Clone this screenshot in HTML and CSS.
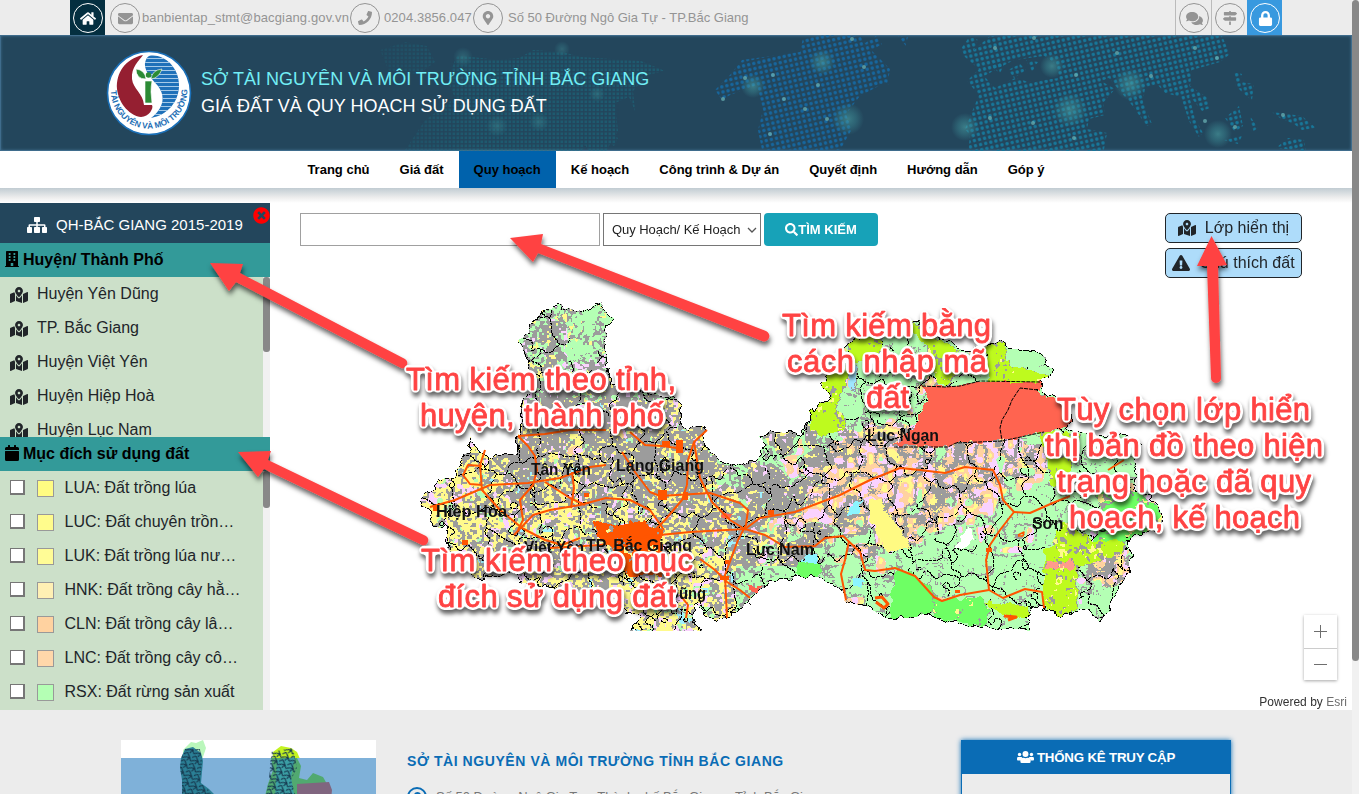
FILE: index.html
```html
<!DOCTYPE html>
<html lang="vi">
<head>
<meta charset="utf-8">
<title>Giá đất và quy hoạch sử dụng đất</title>
<link rel="stylesheet" href="styles.css">
</head>
<body>
<svg class="defs" width="0" height="0">
  <symbol id="home" viewBox="0 0 576 512"><path d="M280.37 148.26L96 300.11V464a16 16 0 0 0 16 16l112.06-.29a16 16 0 0 0 15.92-16V368a16 16 0 0 1 16-16h64a16 16 0 0 1 16 16v95.64a16 16 0 0 0 16 16.05L464 480a16 16 0 0 0 16-16V300L295.67 148.26a12.19 12.19 0 0 0-15.3 0zM571.6 251.47L488 182.56V44.05a12 12 0 0 0-12-12h-56a12 12 0 0 0-12 12v72.61L318.47 43a48 48 0 0 0-61 0L4.34 251.47a12 12 0 0 0-1.6 16.9l25.5 31A12 12 0 0 0 45.15 301l235.22-193.74a12.19 12.19 0 0 1 15.3 0L530.9 301a12 12 0 0 0 16.9-1.6l25.5-31a12 12 0 0 0-1.7-16.93z"/></symbol>
  <symbol id="mail" viewBox="0 0 512 512"><path d="M502.3 190.8c3.9-3.1 9.7-.2 9.7 4.7V400c0 26.5-21.5 48-48 48H48c-26.5 0-48-21.5-48-48V195.6c0-5 5.7-7.8 9.7-4.7 22.4 17.4 52.1 39.5 154.1 113.6 21.1 15.4 56.7 47.8 92.2 47.6 35.7.3 72-32.8 92.3-47.6 102-74.1 131.6-96.3 154-113.7zM256 320c23.2.4 56.6-29.2 73.4-41.4 132.7-96.3 142.8-104.7 173.4-128.7 5.8-4.5 9.2-11.5 9.2-18.9v-19c0-26.5-21.5-48-48-48H48c-26.5 0-48 21.5-48 48v19c0 7.4 3.4 14.3 9.2 18.9 30.6 23.9 40.7 32.4 173.4 128.7 16.8 12.2 50.2 41.8 73.4 41.4z"/></symbol>
  <symbol id="phone" viewBox="0 0 512 512"><path d="M493.4 24.6l-104-24c-11.3-2.6-22.9 3.3-27.5 13.9l-48 112c-4.2 9.8-1.4 21.3 6.9 28l60.6 49.6c-36 76.7-98.9 140.5-177.2 177.2l-49.6-60.6c-6.8-8.3-18.2-11.1-28-6.9l-112 48C3.9 366.5-2 378.1.6 389.4l24 104C27.1 504.2 36.7 512 48 512c256.1 0 464-207.5 464-464 0-11.2-7.7-20.9-18.6-23.4z"/></symbol>
  <symbol id="pin" viewBox="0 0 384 512"><path d="M172.268 501.67C26.97 291.031 0 269.413 0 192 0 85.961 85.961 0 192 0s192 85.961 192 192c0 77.413-26.97 99.031-172.268 309.67-9.535 13.774-29.93 13.773-39.464 0zM192 272c44.183 0 80-35.817 80-80s-35.817-80-80-80-80 35.817-80 80 35.817 80 80 80z"/></symbol>
  <symbol id="chat" viewBox="0 0 576 512"><path d="M416 192c0-88.4-93.1-160-208-160S0 103.6 0 192c0 34.3 14.1 65.9 38 92-13.4 30.2-35.5 54.2-35.8 54.5-2.2 2.3-2.8 5.7-1.5 8.7S4.8 352 8 352c36.6 0 66.9-12.3 88.7-25 32.2 15.7 70.3 25 111.3 25 114.9 0 208-71.6 208-160zm122 220c23.9-26 38-57.7 38-92 0-66.9-53.5-124.2-129.3-148.1.9 6.6 1.3 13.3 1.3 20.1 0 105.9-107.7 192-240 192-10.8 0-21.3-.8-31.7-1.9C207.8 439.6 281.8 480 368 480c41 0 79.1-9.2 111.3-25 21.8 12.7 52.1 25 88.7 25 3.2 0 6.1-1.9 7.3-4.8 1.3-2.9.7-6.3-1.5-8.7-.3-.3-22.4-24.2-35.8-54.5z"/></symbol>
  <symbol id="signs" viewBox="0 0 512 512"><path d="M507.31 84.69L464 41.37c-6-6-14.14-9.37-22.63-9.37H288V16c0-8.84-7.16-16-16-16h-32c-8.84 0-16 7.16-16 16v16H56c-13.25 0-24 10.75-24 24v80c0 13.25 10.75 24 24 24h385.37c8.49 0 16.62-3.37 22.63-9.37l43.31-43.31c6.25-6.26 6.25-16.38 0-22.63zM224 496c0 8.84 7.16 16 16 16h32c8.84 0 16-7.16 16-16V384h-64v112zm232-272H288v-32h-64v32H70.63c-8.49 0-16.62 3.37-22.63 9.37L4.69 276.69c-6.25 6.25-6.25 16.38 0 22.63L48 342.63c6 6 14.14 9.37 22.63 9.37H456c13.25 0 24-10.75 24-24v-80c0-13.25-10.75-24-24-24z"/></symbol>
  <symbol id="lock" viewBox="0 0 448 512"><path d="M400 224h-24v-72C376 68.2 307.8 0 224 0S72 68.2 72 152v72H48c-26.5 0-48 21.5-48 48v192c0 26.5 21.5 48 48 48h352c26.5 0 48-21.5 48-48V272c0-26.5-21.5-48-48-48zm-104 0H152v-72c0-39.7 32.3-72 72-72s72 32.3 72 72v72z"/></symbol>
  <symbol id="sitemap" viewBox="0 0 640 512"><path d="M248 0h144q24 0 24 24v112q0 24-24 24h-48v72h212q36 0 36 36v52h24q24 0 24 24v144q0 24-24 24H504q-24 0-24-24V344q0-24 24-24h40v-40H344v40h48q24 0 24 24v144q0 24-24 24H248q-24 0-24-24V344q0-24 24-24h48v-40H96v40h40q24 0 24 24v144q0 24-24 24H24q-24 0-24-24V344q0-24 24-24h24v-52q0-36 36-36h212v-72h-48q-24 0-24-24V24q0-24 24-24z"/></symbol>
  <symbol id="building" viewBox="0 0 448 512"><path fill-rule="evenodd" d="M32 24q0-24 24-24h336q24 0 24 24v456h20q12 0 12 12v20H0v-20q0-12 12-12h20zM120 64v64h56V64zM272 64v64h56V64zM120 160v64h56v-64zM272 160v64h56v-64zM120 256v64h56v-64zM272 256v64h56v-64zM184 384v96h80v-96z"/></symbol>
  <symbol id="calendar" viewBox="0 0 448 512"><path d="M12 192h424q12 0 12 12v260q0 48-48 48H48q-48 0-48-48V204q0-12 12-12zM448 148v-36q0-48-48-48h-48V12q0-12-12-12h-40q-12 0-12 12v52H160V12q0-12-12-12h-40q-12 0-12 12v52H48Q0 64 0 112v36q0 12 12 12h424q12 0 12-12z"/></symbol>
  <symbol id="map" viewBox="0 0 576 512"><path d="M288 0c-69.59 0-126 56.41-126 126 0 56.26 82.35 158.8 113.9 196.02 6.39 7.54 17.82 7.54 24.2 0C331.65 284.8 414 182.26 414 126 414 56.41 357.59 0 288 0zm0 168c-23.2 0-42-18.8-42-42s18.8-42 42-42 42 18.8 42 42-18.8 42-42 42zM20.12 215.95A32.006 32.006 0 0 0 0 245.66v250.32c0 11.32 11.43 19.06 21.94 14.86L160 448V214.92c-8.84-15.98-16.07-31.54-21.25-46.42L20.12 215.95zM288 359.67c-14.07 0-27.38-6.18-36.51-16.96-19.66-23.2-40.57-49.62-59.49-76.72v182l192 64V266c-18.92 27.09-39.82 53.52-59.49 76.72-9.13 10.77-22.44 16.95-36.51 16.95zm266.06-198.51L416 224v288l139.88-55.95A31.996 31.996 0 0 0 576 426.34V176.02c0-11.32-11.43-19.06-21.94-14.86z"/></symbol>
  <symbol id="search" viewBox="0 0 512 512"><path d="M505 442.7L405.3 343c-4.5-4.5-10.6-7-17-7H372c27.6-35.3 44-79.7 44-128C416 93.1 322.9 0 208 0S0 93.1 0 208s93.1 208 208 208c48.3 0 92.7-16.4 128-44v16.3c0 6.4 2.5 12.5 7 17l99.7 99.7c9.4 9.4 24.6 9.4 33.9 0l28.3-28.3c9.4-9.4 9.4-24.6.1-34zM208 336c-70.7 0-128-57.2-128-128 0-70.7 57.2-128 128-128 70.7 0 128 57.2 128 128 0 70.7-57.2 128-128 128z"/></symbol>
  <symbol id="warn" viewBox="0 0 576 512"><path d="M569.517 440.013C587.975 472.007 564.806 512 527.94 512H48.054c-36.937 0-59.999-40.055-41.577-71.987L246.423 23.985c18.467-32.009 64.72-31.951 83.154 0l239.94 416.028zM288 354c-25.405 0-46 20.595-46 46s20.595 46 46 46 46-20.595 46-46-20.595-46-46-46zm-43.673-165.346l7.418 136c.347 6.364 5.609 11.346 11.982 11.346h48.546c6.373 0 11.635-4.982 11.982-11.346l7.418-136c.375-6.874-5.098-12.654-11.982-12.654h-63.383c-6.884 0-12.356 5.78-11.981 12.654z"/></symbol>
  <symbol id="times" viewBox="0 0 512 512"><path d="M256 8C119 8 8 119 8 256s111 248 248 248 248-111 248-248S393 8 256 8zm121.600 313.100c4.700 4.700 4.700 12.300 0 17L338 377.600c-4.700 4.700-12.300 4.700-17 0L256 312l-65.100 65.600c-4.700 4.700-12.300 4.700-17 0L134.400 338c-4.700-4.700-4.700-12.300 0-17l65.600-65-65.600-65.100c-4.700-4.700-4.700-12.300 0-17l39.600-39.600c4.700-4.700 12.300-4.700 17 0l65 65.700 65.100-65.600c4.700-4.700 12.300-4.700 17 0l39.600 39.600c4.700 4.700 4.700 12.300 0 17L312 256l65.600 65.100z"/></symbol>
  <symbol id="users" viewBox="0 0 640 512"><circle cx="96" cy="160" r="64"/><circle cx="544" cy="160" r="64"/><circle cx="320" cy="144" r="112"/><path d="M32 256h128q25 0 45 18-65 36-75 110H32q-32 0-32-32v-32q0-64 32-64zM608 256H480q-25 0-45 18 65 36 75 110h98q32 0 32-32v-32q0-64-32-64zM243 288q77 35 154 0 115 0 115 115v29q0 48-48 48H176q-48 0-48-48v-29q0-115 115-115z"/></symbol>
</svg>

<div class="page">
  <div class="topbar">
    <a class="ring-box home"><span class="ring"><svg class="i-home"><use href="#home"/></svg></span></a>
    <span class="ring mail"><svg class="i15"><use href="#mail"/></svg></span><span class="t-mail">banbientap_stmt@bacgiang.gov.vn</span>
    <span class="ring"><svg class="i14"><use href="#phone"/></svg></span><span class="t-phone">0204.3856.047</span>
    <span class="ring"><svg class="i14"><use href="#pin"/></svg></span><span class="t-addr">Số 50 Đường Ngô Gia Tự - TP.Bắc Giang</span>
    <div class="tools">
      <a class="ring-box line"><span class="ring"><svg class="i-chat"><use href="#chat"/></svg></span></a>
      <a class="ring-box line"><span class="ring"><svg class="i14"><use href="#signs"/></svg></span></a>
      <a class="ring-box login"><span class="ring"><svg class="i15"><use href="#lock"/></svg></span></a>
    </div>
  </div>

  <header class="banner">
    <svg class="banner-art" width="1352" height="116" viewBox="0 35 1352 116">
      <defs>
        <pattern id="dotA" width="4" height="4" patternUnits="userSpaceOnUse"><rect x=".5" y=".5" width="2.600" height="2.600" fill="#19788b"/></pattern>
        <pattern id="dotB" width="5.200" height="5.200" patternUnits="userSpaceOnUse" patternTransform="rotate(-13)"><circle cx="2.600" cy="2.600" r="1.700" fill="#16679f"/></pattern>
        <pattern id="dotC" width="5.200" height="5.200" patternUnits="userSpaceOnUse" patternTransform="rotate(-13)"><circle cx="2.600" cy="2.600" r="1.700" fill="#17789b"/></pattern>
        <radialGradient id="glow"><stop offset="0" stop-color="#4fa9ab" stop-opacity=".55"/><stop offset=".5" stop-color="#3d8f98" stop-opacity=".4"/><stop offset="1" stop-color="#3d8f98" stop-opacity="0"/></radialGradient>
        <linearGradient id="fadeG" x1="340" x2="480" y1="0" y2="0" gradientUnits="userSpaceOnUse"><stop offset="0" stop-color="#fff" stop-opacity=".04"/><stop offset="1" stop-color="#fff" stop-opacity=".42"/></linearGradient>
        <mask id="fade" maskUnits="userSpaceOnUse" x="0" y="0" width="1352" height="160"><rect width="1352" height="160" fill="url(#fadeG)"/></mask>
      </defs>
      <path fill="url(#dotA)" mask="url(#fade)" d="M380 50l25-8 22 4 8 16-16 12-30-2zM405 150l20-30 30-22-8-18 10-25 40 5 22-2 14-8 30 2 18 5 60 4 24 10-18 4-14 16 2 20-6-14-14 6 3 28-12 20 5 18-16-8-10-16-8 14-4 18-8-20-12-6-24 28zM606 130l12 8-4 8-10-6z"/>
      <path fill="url(#dotB)" d="M715 90l15-15 12-15 58-8 3-14 22-3 35 1 6 9 24 24-2 12-28 15-14 18 6 15-12 21h-78l-4-20 5-20-6-25-27 10-8 5zM862 45l14-9 6 8-10 6zM880 78l4-18 5 25zM898 36h10l-2 10z"/>
      <path fill="url(#dotC)" d="M960 50l10-14 8 4-4 10 16-14h232l8 18-10 8-28 8-2 16 18 12 2 10-8 3-13-16 6 24 8 14-4 4-10-16-8-24-16-4-8-9-12 4-2 14 9 22-5 2-16-22-22-26-8 3 14 8-12 14 2 12-16 4-2 10 20 4-4 22H968l2-20-5-6 14-34-12-14 12-12-14-12zM1234 72l8 2-2 8 14 2-2 16-8-6-8-8zM1225 118l14-12 4 20-8 6zM1250 116l8 12-6 4zM1272 112l30 4 14 12-14 2-8-6-14-6zM1224 140l18-4-4 8zM1276 148l12-10 16 2 2 11z"/>
      <path fill="#23465c" d="M984 76l30-16 30-4 12 8 3 14-30 4-14-4-20 10z"/>
      <path fill="url(#dotC)" d="M990 66l6-5 8 4-4 8zM1008 70l12-6 6 6-12 8zM1026 60l12 2-6 10z"/>
      <g fill="url(#glow)"><circle cx="822" cy="62" r="13"/><circle cx="753" cy="86" r="12"/><circle cx="848" cy="119" r="16"/><circle cx="965" cy="127" r="14"/><circle cx="1052" cy="66" r="12"/><circle cx="1070" cy="110" r="17"/><circle cx="1130" cy="84" r="16"/><circle cx="1218" cy="134" r="14"/></g>
      <g fill="url(#glow)" opacity=".55"><circle cx="562" cy="49" r="8"/><circle cx="463" cy="57" r="10"/><circle cx="497" cy="126" r="11"/><circle cx="539" cy="122" r="10"/><circle cx="597" cy="94" r="8"/></g>
      <g fill="#6db6b8" opacity=".7"><circle cx="745" cy="78" r="2"/><circle cx="773" cy="75" r="2"/><circle cx="723" cy="99" r="2"/><circle cx="784" cy="99" r="2"/><circle cx="805" cy="109" r="2"/><circle cx="818" cy="85" r="2"/><circle cx="770" cy="134" r="2"/><circle cx="827" cy="119" r="2"/><circle cx="864" cy="67" r="2"/><circle cx="852" cy="39" r="2"/><circle cx="995" cy="48" r="2"/><circle cx="1034" cy="38" r="2"/><circle cx="1117" cy="53" r="2"/><circle cx="1076" cy="75" r="2"/><circle cx="1151" cy="76" r="2"/><circle cx="1195" cy="48" r="2"/><circle cx="1217" cy="58" r="2"/><circle cx="990" cy="118" r="2"/><circle cx="1033" cy="123" r="2"/><circle cx="1074" cy="138" r="2"/><circle cx="1205" cy="121" r="2"/><circle cx="1235" cy="127" r="2"/><circle cx="1283" cy="115" r="2"/></g>
    </svg>
    <svg class="logo" width="86" height="86" viewBox="-43 -43 86 86">
      <circle r="41.500" fill="#fff" stroke="#1b70b8" stroke-width="1.600"/>
      <path fill="#951f31" d="M-6-38C-24-34-33-20-32-4-30 12-18 23-8 24 0 24 5 15 3 12H-5C-6 0-16-4-17-14-18-26-10-32-6-38z"/>
      <clipPath id="lobe"><path d="M0-37C14-40 31-26 30-6 29 10 18 22 2 25 16 14 16 2 9-7 3-14-5-22-4-30-3-34-2-36 0-37z"/></clipPath>
      <g clip-path="url(#lobe)"><rect x="-6" y="-40" width="40" height="68" fill="#1f71b9"/><path stroke="#a5cae8" stroke-width="1" d="M-6-34.500h40M-6-30.500h40M-6-26.500h40M-6-22.500h40M-6-18.500h40M-6-14.500h40M-6-10.500h40M-6-6.500h40M-6-2.500h40M-6 1.500h40M-6 5.500h40M-6 9.500h40M-6 13.500h40M-6 17.500h40M-6 21.500h40"/></g>
      <path fill="#2c8b35" stroke="#fff" stroke-width=".6" d="M-4-12h7q-1 5-1 11l1 11h-7V-1zM-3-14q-10 0-10-10 9 1 10 10zM2-14q8-1 11-10-10 1-11 10z"/><circle cx="-.5" cy="-18" r="2.700" fill="#2c8b35"/>
      <path id="arc" fill="none" d="M-38.200-2.500A38.200 38.200 0 0 0 38.200-2.500"/>
      <text class="logo-text"><textPath href="#arc" startOffset="0" textLength="121" lengthAdjust="spacing">TÀI NGUYÊN VÀ MÔI TRƯỜNG</textPath></text>
    </svg>
    <div class="titles"><div class="org">SỞ TÀI NGUYÊN VÀ MÔI TRƯỜNG TỈNH BẮC GIANG</div><div class="app">GIÁ ĐẤT VÀ QUY HOẠCH SỬ DỤNG ĐẤT</div></div>
  </header>

  <nav class="nav"><a>Trang chủ</a><a>Giá đất</a><a class="active">Quy hoạch</a><a>Kế hoạch</a><a>Công trình &amp; Dự án</a><a>Quyết định</a><a>Hướng dẫn</a><a>Góp ý</a></nav>
  <div class="nav-shade"></div>

  <main class="main">
    <aside class="side">
      <div class="side-title"><svg class="i-site"><use href="#sitemap"/></svg><span>QH-BẮC GIANG 2015-2019</span><svg class="close"><use href="#times"/></svg></div>
      <div class="side-head"><svg class="i-head"><use href="#building"/></svg>Huyện/ Thành Phố</div>
      <div class="list districts">
        <div class="row"><svg class="i-map"><use href="#map"/></svg>Huyện Yên Dũng</div>
        <div class="row"><svg class="i-map"><use href="#map"/></svg>TP. Bắc Giang</div>
        <div class="row"><svg class="i-map"><use href="#map"/></svg>Huyện Việt Yên</div>
        <div class="row"><svg class="i-map"><use href="#map"/></svg>Huyện Hiệp Hoà</div>
        <div class="row"><svg class="i-map"><use href="#map"/></svg>Huyện Lục Nam</div>
        <div class="bar"><i></i></div>
      </div>
      <div class="side-head"><svg class="i-head"><use href="#calendar"/></svg>Mục đích sử dụng đất</div>
      <div class="list landuse">
        <div class="row"><b class="check"></b><b class="sw c-lua"></b>LUA: Đất trồng lúa</div>
        <div class="row"><b class="check"></b><b class="sw c-luc"></b>LUC: Đất chuyên trồn…</div>
        <div class="row"><b class="check"></b><b class="sw c-luk"></b>LUK: Đất trồng lúa nư…</div>
        <div class="row"><b class="check"></b><b class="sw c-hnk"></b>HNK: Đất trồng cây hằ…</div>
        <div class="row"><b class="check"></b><b class="sw c-cln"></b>CLN: Đất trồng cây lâ…</div>
        <div class="row"><b class="check"></b><b class="sw c-lnc"></b>LNC: Đất trồng cây cô…</div>
        <div class="row"><b class="check"></b><b class="sw c-rsx"></b>RSX: Đất rừng sản xuất</div>
        <div class="bar"><i></i></div>
      </div>
    </aside>
    <section class="mapview">
      <canvas id="province" width="1082" height="507"></canvas>
      <div class="toolbar">
        <div class="field"></div>
        <div class="select"><span>Quy Hoạch/ Kế Hoạch</span><svg width="10" height="6" viewBox="0 0 10 6"><path d="M1 1l4 4 4-4" fill="none" stroke="#555" stroke-width="1.300"/></svg></div>
        <div class="find"><svg><use href="#search"/></svg><span>TÌM KIẾM</span></div>
        <div class="layers">
          <div class="layer first"><svg><use href="#map"/></svg><span>Lớp hiển thị</span></div>
          <div class="layer"><svg><use href="#warn"/></svg><span>Chú thích đất</span></div>
        </div>
      </div>
      <div class="corner">
        <div class="zoom"><i><svg width="14" height="14"><path d="M0 6.500h13M6.500 0v13"/></svg></i><i><svg width="14" height="14"><path d="M0 6.500h13"/></svg></i></div>
        <div class="credit">Powered by <span>Esri</span></div>
      </div>
    </section>
  </main>

  <footer class="foot">
    <svg class="thumb" width="255" height="60" viewBox="0 0 255 60">
      <defs><pattern id="cells" width="9" height="8" patternUnits="userSpaceOnUse" patternTransform="rotate(24)"><path d="M0 3l3-3 4 4-2 4M3 5l4-1 2 3M0 7l3-2" fill="none" stroke="#163a50" stroke-width="1.100"/></pattern></defs>
      <rect width="255" height="60" fill="#fff"/>
      <path fill="#baf7bb" d="M62 10l8-8 5 1 7-3 3 8-4 12-19 3z"/><path fill="#c3f320" d="M152 12l8-6 10 2 6 4 3 7-8 8-20 0z"/>
      <rect y="18" width="255" height="42" fill="#7fb1d9"/>
      <path fill="#2a7f95" d="M60 18l4-9 8-2 8 6 2 8-2 22 8 6 6 6 2 5H61V40l-2-12z"/>
      <path fill="#51a970" d="M150 18h26l4 8-2 12 8 2 6-7 10 4 4 7 1 16h-64l4-16 5-14z"/>
      <path fill="#3b9fa5" d="M156 20l18-3-4 20 4 23h-20z"/>
      <path fill="#80657f" d="M176 44l32-2 3 8-1 10h-34z"/>
      <path fill="url(#cells)" d="M60 18l4-9 15 0 2 12-2 22 8 6 6 11H61V40l-2-12zM150 12l22-4 4 20-6 12 6 20h-32l4-20z"/>
    </svg>
    <div class="contact"><h2>SỞ TÀI NGUYÊN VÀ MÔI TRƯỜNG TỈNH BẮC GIANG</h2><p><span class="ring blue"><svg><use href="#pin"/></svg></span>Số 50 Đường Ngô Gia Tự - Thành phố Bắc Giang - Tỉnh Bắc Giang</p></div>
    <div class="stats"><h3><svg><use href="#users"/></svg>THỐNG KÊ TRUY CẬP</h3></div>
  </footer>
</div>
<div class="page-bar"><i></i></div>

<svg class="notes" width="1359" height="794" viewBox="0 0 1359 794">
  <defs>
    <filter id="drop" filterUnits="userSpaceOnUse" x="0" y="0" width="1359" height="794"><feDropShadow dx="1" dy="4" stdDeviation="2.500" flood-color="#000" flood-opacity=".6"/></filter>
    <filter id="halo" filterUnits="userSpaceOnUse" x="380" y="290" width="979" height="350" color-interpolation-filters="sRGB">
      <feGaussianBlur in="SourceAlpha" stdDeviation="2"/>
      <feComponentTransfer result="wide"><feFuncR type="linear" slope="0" intercept="1"/><feFuncG type="linear" slope="0" intercept="1"/><feFuncB type="linear" slope="0" intercept="1"/><feFuncA type="linear" slope="14" intercept="-.9"/></feComponentTransfer>
      <feDropShadow in="wide" dx="1" dy="4" stdDeviation="2.300" flood-color="#000" flood-opacity=".6" result="shade"/>
      <feMerge><feMergeNode in="shade"/><feMergeNode in="SourceGraphic"/></feMerge>
    </filter>
  </defs>
  <g class="arrows" filter="url(#drop)">
    <path d="M210 263l33 1-3 9 165 86a5 5 0 0 1-4 9L236 282l-7 9z"/>
    <path d="M238 452l33-1-3 9 158 76a5 5 0 0 1-4 9L264 469l-6 8z"/>
    <path d="M510 238l33-4-2 10 225 87a5 5 0 0 1-4 10L538 253l-5 9z"/>
    <path d="M1211.500 236l15.500 29-9 1 3 112a5 5 0 0 1-10 0l-4-112h-10z"/>
  </g>
  <g class="note" filter="url(#halo)">
    <text x="406" y="389.500" textLength="270">Tìm kiếm theo tỉnh,</text><text x="420" y="425.500" textLength="244">huyện, thành phố</text>
    <text x="421" y="570.500" textLength="272">Tìm kiếm theo mục</text><text x="438" y="606.500" textLength="238">đích sử dụng đất</text>
    <text x="782" y="335.500" textLength="209">Tìm kiếm bằng</text><text x="787" y="371.500" textLength="200">cách nhập mã</text><text x="866" y="407.500" textLength="43">đất</text>
    <text x="1057" y="419.500" textLength="253">Tùy chọn lớp hiển</text><text x="1045" y="455.500" textLength="278">thị bản đồ theo hiện</text><text x="1057" y="491.500" textLength="254">trạng hoặc đã quy</text><text x="1069" y="527.500" textLength="231">hoạch, kế hoạch</text>
  </g>
</svg>
<script src="map.js"></script>
</body>
</html>
```
FILE: styles.css
```css
* { box-sizing: border-box; }
body { margin: 0; width: 1359px; height: 794px; overflow: hidden; position: relative; display: flex; background: #ececec; font-family: "Liberation Sans", Arial, sans-serif; color: #212529; }
svg { fill: currentColor; flex: none; }
.defs { position: absolute; }
.page { width: 1352px; height: 794px; overflow: hidden; flex: none; }
.page-bar { width: 7px; height: 794px; background: #f1f1f1; }
.page-bar i { display: block; height: 661px; background: #888; border-radius: 4px; }

.topbar { height: 35px; padding-left: 70px; display: flex; color: #949494; font-size: 13px; white-space: nowrap; }
.ring-box { width: 35px; height: 35px; display: block; padding: 3px; flex: none; }
.ring { width: 30px; height: 30px; margin-top: 3px; border: 1px solid #949494; border-radius: 50%; display: flex; align-items: center; justify-content: center; flex: none; }
.ring-box .ring { margin: 0; }
.home { background: #042f40; color: #fff; }
.home .ring, .login .ring { border-color: #fff; }
.mail { margin-left: 5px; }
.i-home { width: 16px; height: 15px; }
.i15 { width: 15px; height: 15px; }
.i14 { width: 14px; height: 14px; }
.i-chat { width: 17px; height: 15px; }
.topbar > span:not(.ring) { line-height: 35px; flex: none; }
.t-mail { width: 210px; padding-left: 2px; letter-spacing: .13px; }
.t-phone { width: 93px; padding-left: 4px; letter-spacing: .08px; }
.t-addr { padding-left: 5px; }
.tools { margin-left: auto; margin-right: 70px; display: flex; }
.line { width: 36px; border-left: 1px solid #bbb; }
.login { background: #3899df; color: #fff; }

.banner { position: relative; height: 116px; background: #23465c; border: 1px solid #3f6c8c; display: flex; box-shadow: inset 0 0 3px #3f6c8c; }
.banner-art { position: absolute; left: -1px; top: -1px; }
.logo { position: relative; margin: 14px 0 0 105px; }
.logo-text { font-size: 8.300px; font-weight: bold; fill: #1b6db4; }
.titles { position: relative; margin: 30px 0 0 9px; font-size: 18px; line-height: 27px; white-space: nowrap; color: #fff; }
.org { color: #72eef5; }

.nav { height: 37px; background: #fff; display: flex; justify-content: center; font-size: 13px; font-weight: bold; line-height: 37px; color: #000; }
.nav a { padding: 0 15px; white-space: nowrap; }
.nav .active { background: #0062ac; }
.nav-shade { height: 15px; background: linear-gradient(#c1ccd2, #eee 65%, #fff); }

.main { height: 507px; display: flex; background: #fff; }
.side { width: 270px; height: 507px; flex: none; }
.side-title { position: relative; height: 40px; padding: 3px 0 0 27px; background: #23465c; color: #fff; display: flex; align-items: center; gap: 9px; font-size: 15px; white-space: nowrap; }
.i-site { width: 20px; height: 16px; }
.close { position: absolute; right: 0; top: 4px; width: 17px; height: 17px; color: #f00; }
.side-head { height: 34px; background: #339a99; color: #000; font-size: 16px; font-weight: bold; display: flex; align-items: center; padding: 0 0 0 5px; gap: 4px; }
.i-head { width: 14px; height: 16px; margin-bottom: 2px; }
.list { position: relative; overflow: hidden; background: #cce0c9; font-size: 16px; white-space: nowrap; }
.districts { height: 160px; }
.landuse { height: 239px; }
.row { height: 34px; display: flex; align-items: center; padding-left: 10px; }
.i-map { width: 18px; height: 16px; margin: 1px 9px 0 0; }
.check { width: 15px; height: 15px; background: #fff; border: 1px solid #767676; border-width: 1px 2px 2px 1px; margin: 0 12px 2px 0; }
.sw { width: 17px; height: 17px; border: 1px solid #999; margin: 1px 10.500px 0 0; }
.c-lua { background: #fffc82; } .c-luc { background: #fffc8c; } .c-luk { background: #fffc96; } .c-hnk { background: #fff0b4; } .c-cln { background: #ffd2a0; } .c-lnc { background: #ffd7aa; } .c-rsx { background: #b4ffb4; }
.bar { position: absolute; right: 0; top: 0; width: 7px; height: 100%; background: #f1f1f1; }
.bar i { display: block; height: 75px; background: #888; border-radius: 3px; }
.landuse .bar i { height: 37px; }

.mapview { position: relative; width: 1082px; height: 507px; display: flex; flex-direction: column; justify-content: space-between; }
#province { position: absolute; left: 0; top: 0; }
.toolbar { position: relative; display: flex; padding: 10px 50px 0 30px; gap: 3px; }
.field { width: 300px; height: 33px; border: 1px solid #a0a0a0; background: #fff; }
.select { width: 158px; height: 33px; border: 1px solid #767676; background: #fff; display: flex; align-items: center; justify-content: space-between; padding: 0 3px 0 8px; font-size: 13px; white-space: nowrap; color: #222; letter-spacing: -.05px; }
.find { width: 114px; height: 33px; background: #17a2b8; border-radius: 4px; color: #fff; font-weight: bold; font-size: 13px; display: flex; align-items: center; justify-content: center; white-space: nowrap; }
.find svg { width: 13px; height: 13px; }
.layers { margin-left: auto; display: flex; flex-direction: column; gap: 5px; }
.layer { width: 137px; height: 30px; background: #aedcfa; border: 1px solid #212529; border-radius: 5px; display: flex; align-items: center; justify-content: center; gap: 9px; font-size: 16px; white-space: nowrap; }
.layer svg { width: 18px; height: 16px; margin-bottom: 1px; }
.layer span { padding-bottom: 1px; }
.corner { position: relative; display: flex; flex-direction: column; align-items: flex-end; gap: 14px; padding-right: 5px; }
.zoom { width: 33px; margin-right: 10px; background: #fff; box-shadow: 0 1px 3px rgba(0,0,0,.35); }
.zoom i { height: 33px; display: flex; align-items: center; justify-content: center; }
.zoom i + i { height: 32px; border-top: 1px solid #ccc; }
.zoom path { stroke: #6e6e6e; stroke-width: 1; fill: none; }
.credit { height: 16px; line-height: 16px; font-size: 12px; color: #323232; letter-spacing: .02px; }
.credit span { color: #6e6e6e; }

.foot { height: 84px; overflow: hidden; display: flex; padding: 30px 121px 0; }
.thumb { flex: none; }
.contact { margin-left: 31px; white-space: nowrap; color: #0a6cb5; }
.contact h2 { margin: 11px 0 0; font-size: 14px; line-height: 20px; letter-spacing: .57px; }
.contact p { margin: 12px 0 0; display: flex; font-size: 13px; line-height: 28px; color: #777; }
.blue { width: 20px; height: 20px; margin: 4px 9px 0 0; border: 2px solid #0a6cb5; color: #0a6cb5; }
.blue svg { width: 9px; height: 10px; }
.stats { width: 270px; height: 100px; margin-left: auto; border: 1px solid #0a6cb5; box-shadow: 0 0 5px #0a6cb5; flex: none; }
.stats h3 { margin: 0; height: 33px; background: #0a6cb5; color: #fff; font-size: 13.300px; display: flex; align-items: center; justify-content: center; gap: 3px; white-space: nowrap; letter-spacing: -.2px; padding-bottom: 1px; }
.stats svg { width: 17px; height: 14px; }

.notes { position: absolute; left: 0; top: 0; pointer-events: none; }
.arrows { fill: #ff4343; }
.note { font-size: 31px; fill: #ff4343; stroke: #ff4343; stroke-width: .8px; stroke-linejoin: round; }
```
FILE: map.js
```js
const canvas = document.getElementById('province');
const W = canvas.width, H = canvas.height, OX = 270, OY = 203;
const g = canvas.getContext('2d');

function hash(x, y, s) {
  let h = Math.imul(x, 374761393) + Math.imul(y, 668265263) + Math.imul(s, 974711);
  h = Math.imul(h ^ (h >>> 13), 1274126177);
  return ((h ^ (h >>> 16)) >>> 0) / 4294967296;
}
function noise(x, y, scale, s) {
  x /= scale; y /= scale;
  const i = Math.floor(x), j = Math.floor(y);
  let u = x - i, v = y - j;
  u = u * u * (3 - 2 * u); v = v * v * (3 - 2 * v);
  const a = hash(i, j, s), b = hash(i + 1, j, s), c = hash(i, j + 1, s), d = hash(i + 1, j + 1, s);
  return a + (b - a) * u + (c - a) * v + (a - b - c + d) * u * v;
}

// Province boundary and single-use parcels, in window coordinates.
const outline = '558,304 566,309 585,311 600,303 606,312 615,319 607,328 605,350 607,366 611,384 640,388 655,394 672,395 681,402 681,423 688,430 694,425 707,427 703,437 712,452 722,462 738,465 748,462 757,458 762,454 764,443 758,438 772,430 790,431 799,436 805,428 811,413 817,403 830,400 828,393 820,384 827,375 836,366 846,345 860,336 890,330 917,319 926,332 950,341 960,350 985,347 1005,340 1008,348 1022,350 1035,350 1044,357 1047,366 1055,370 1050,376 1040,380 1042,390 1046,396 1053,393 1058,398 1070,407 1073,420 1068,430 1085,432 1092,436 1130,435 1140,445 1133,470 1137,483 1134,490 1150,497 1160,508 1163,520 1158,530 1145,534 1130,536 1126,545 1132,556 1130,570 1127,580 1115,590 1112,605 1105,616 1100,620 1092,614 1089,609 1075,613 1060,616 1050,612 1042,608 1032,608 1026,618 1033,630 1000,630 990,626 975,627 960,624 940,620 930,614 905,618 890,620 880,614 866,605 847,604 842,590 830,583 818,576 800,577 790,580 770,580 762,588 752,600 738,610 726,618 718,621 702,612 697,603 693,616 703,632 630,632 640,618 625,612 622,600 560,590 520,582 518,572 480,580 470,575 465,560 447,555 445,540 446,528 432,525 429,512 420,500 425,495 433,490 438,478 455,478 462,460 468,452 470,437 477,450 490,458 505,455 517,455 516,437 522,420 522,400 530,390 530,370 528,360 519,347 518,342 530,332 533,320 545,312';
const LIME = '#befa1e', MINT = '#b4ffb4', LEAF = '#6eff64', RED = '#ff6450', SAND = '#fffa82', CORAL = '#ff5500';
const parcels = [
  [MINT, '556,303 566,309 585,311 600,303 615,319 605,335 604,350 590,352 570,364 566,352 572,332 558,320', 4],
  [LIME, '820,384 836,366 850,370 842,395 833,410 828,398', 2],
  [LIME, '811,413 817,403 832,402 846,418 847,428 820,436 809,428', 1],
  [LIME, '848,338 880,326 884,350 870,360 850,364', 2],
  [LIME, '912,318 926,332 958,350 952,384 938,384 926,345 914,335', 2],
  [LIME, '985,347 1005,340 1008,356 1030,372 1052,374 1040,382 988,382', 2],
  [MINT, '1006,348 1040,350 1046,362 1036,366 1014,368 1006,358', 0],
  [SAND, '870,500 882,498 890,518 902,530 912,546 908,550 886,552 870,520', 0],
  [LEAF, '896,568 912,572 934,592 934,612 905,618 890,620 892,596', 0],
  [LEAF, '934,592 938,600 984,598 990,612 984,626 934,618', 1],
  [LEAF, '795,572 800,562 822,562 820,576 800,577', 0],
  [LEAF, '1092,490 1134,492 1160,508 1162,528 1110,546 1092,540 1106,520', 2],
  [LIME, '1044,548 1052,546 1062,520 1092,540 1122,540 1126,552 1100,562 1078,566 1078,610 1058,616 1043,606', 2],
  [LIME, '985,602 1028,606 1030,620 1002,616', 1],
  [LIME, '1036,430 1080,434 1066,480 1052,488 1046,450', 3],
  [RED, '922,386 960,386 980,381 1040,382 1038,392 1046,397 1060,398 1072,412 1072,426 1044,432 1002,441 956,443 948,447 894,446 914,428 918,416 928,400', -1],
  [CORAL, '593,520 612,526 640,520 662,530 663,575 628,575 615,552 600,540', 1],
  ['#ff6450', '724,513 730,515 727,521 722,518', 0],
  ['#ff6450', '750,586 760,585 758,592 752,591', 0],
  ['#ff9b8c', '1046,562 1074,560 1076,568 1046,570', 1],
  ['#8cf5ff', '848,506 846,515 858,514 862,500', 0], ['#8cf5ff', '804,555 817,556 816,563 803,562', 0],
  ['#8cf5ff', '852,578 864,580 862,588 854,586', 0], ['#a0e6ff', '850,364 858,366 854,390 848,386', 0],
  ['#fff', '955,548 970,526 973,540 962,550', -1]
];
const points = s => s.split(' ').map(p => p.split(',').map(Number));
function trace(c, s) { c.beginPath(); points(s).forEach(p => c.lineTo(p[0], p[1])); c.closePath(); }

const mask = document.createElement('canvas');
mask.width = W; mask.height = H;
const m = mask.getContext('2d', { willReadFrequently: true });
m.translate(-OX, -OY);
function raster(draw) { m.clearRect(OX, OY, W, H); draw(); return m.getImageData(0, 0, W, H).data; }

const zone = new Uint8Array(W * H);
const full = raster(() => { trace(m, outline); m.fill(); });
parcels.forEach((p, k) => {
  const d = raster(() => { trace(m, p[1]); m.fill(); });
  for (let i = 0; i < W * H; i++) if (d[i * 4 + 3] > 127) zone[i] = k + 1;
});

const rgb = h => h.length === 4 ? [255, 255, 255] : [1, 3, 5].map(i => parseInt(h.substr(i, 2), 16));
const GREY = [156, 156, 156], YEL = rgb('#fffa8c'), PINK = rgb('#fad2ff'), ORA = rgb('#ffd2a0'), GRN = rgb(MINT), CYAN = rgb('#a0f0ff'), BLK = [0, 0, 0];
const out = g.createImageData(W, H);
function cell(x, y) {
  const s = 32;
  const wx = x + (noise(x, y, 9, 5) - .5) * 15, wy = y + (noise(x, y, 9, 6) - .5) * 15;
  const i = Math.floor(wx / s), j = Math.floor(wy / s);
  let best = 1e9, id = 0;
  for (let a = -1; a < 2; a++) for (let b = -1; b < 2; b++) {
    const px = (i + a + hash(i + a, j + b, 7)) * s, py = (j + b + hash(i + a, j + b, 8)) * s;
    const d = (px - wx) ** 2 + (py - wy) ** 2;
    if (d < best) { best = d; id = (i + a) * 1000 + j + b; }
  }
  return id;
}
const near = (x, y, cx, cy, rx, ry) => Math.max(0, 1 - ((x - cx) / rx) ** 2 - ((y - cy) / ry) ** 2);
for (let py = 8; py < H; py++) for (let px = 8; px < W - 8; px++) {
  const x = px + OX, y = py + OY;
  const sx = Math.round(px + (noise(x, y, 5, 30) - .5) * 5), sy = Math.round(py + (noise(x, y, 5, 31) - .5) * 5);
  const i = py * W + px, q = sy * W + sx;
  if (full[q * 4 + 3] < 128 || y > 630) continue;
  const k = zone[q], p = k ? parcels[k - 1] : null;
  const fine = noise(x, y, 2.400, 11), mid = noise(x, y, 10, 12), big = noise(x, y, 24, 13), tint = noise(x, y, 5, 14);
  const e = Math.min(1, Math.max(0, (x - 730) / 130));
  let col;
  if (p) {
    col = rgb(p[0]);
    if (p[2] > 0 && fine * .5 + mid * .5 > .72 - p[2] * .035) col = tint > .65 ? YEL : GREY;
  } else {
    const hot = near(x, y, 915, 470, 110, 65) + near(x, y, 850, 500, 90, 90) * .9 + near(x, y, 1000, 455, 55, 40) + near(x, y, 1095, 565, 40, 35);
    if (e + (mid - .5) * .5 + (big - .5) * .8 > .5) {
      col = GRN;
      const t = hot * .28 + big * .35 + mid * .35;
      if (t > .52) col = tint > .6 ? PINK : tint > .26 ? ORA : YEL;
      const ridge = Math.abs(mid - .5) * .7 + Math.abs(fine - .5) * .35;
      if (ridge < .05 + Math.min(hot, 1) * .1 + (big > .6 ? .035 : 0)) col = GREY;
    } else {
      const north = y < 400 ? .3 : 0;
      col = tint > .66 - north * .2 ? (mid > .6 ? GRN : PINK) : mid > .86 ? CYAN : YEL;
      if (north && tint < .6) col = mid > .6 ? YEL : GRN;
      const grey = near(x, y, 600, 440, 130, 80) * .15 + near(x, y, 780, 480, 60, 50) * .1 - near(x, y, 460, 510, 60, 70) * .13 - near(x, y, 680, 600, 70, 60) * .08 + e * .1;
      if (fine * .7 + big * .3 < .52 + grey) col = GREY;
      if (x > 705 && (y < 490 && big + mid > 1.02 || y > 565 && x > 735)) col = fine > .36 ? GRN : GREY;
    }
    const c = cell(x, y);
    if ((c !== cell(x + 1, y) || c !== cell(x, y + 1)) && (x + y) % 4 > 0) col = BLK;
  }
  const edge = [[1, 0], [-1, 0], [0, 1], [0, -1]].some(d => full[((sy + d[1]) * W + sx + d[0]) * 4 + 3] < 128);
  if (edge && y < 630 && (x + 2 * y) % 7 > 0) col = BLK;
  if (p && p[2] >= 0 && p[0] !== CORAL && p[0] !== '#ff6450' && zone[q + 1] !== k && (x + y) % 4 > 0 && p[0] !== '#8cf5ff') col = GREY;
  out.data.set([...col, 255], i * 4);
}
g.putImageData(out, 0, 0);
g.translate(-OX, -OY);

function line(s, color, w) { g.beginPath(); points(s).forEach(p => g.lineTo(p[0], p[1])); g.strokeStyle = color; g.lineWidth = w; g.lineJoin = 'round'; g.stroke(); }
[
  '518,436 528,446 535,456 537,470 533,485 520,500 523,520 518,530',
  '518,436 545,434 570,430 606,430',
  '430,507 455,500 490,485 528,483 560,478 590,467 606,465',
  '485,450 480,465 482,490 500,510 522,528 545,540 562,545 580,538',
  '482,466 468,465 463,475 470,484 482,485',
  '514,535 533,515 550,510 580,505 606,498 630,500 650,510 664,530',
  '545,482 570,498 585,505', '572,472 574,488 571,508',
  '630,432 645,445 662,446 677,448 682,440',
  '707,430 694,442 688,460 687,485 682,500 665,520 650,535',
  '622,452 635,472 650,492 660,496 710,493 740,503 748,510 746,525 738,540 725,575 727,618',
  '694,442 700,478 712,502 730,520 746,530',
  '550,548 600,545 650,536 690,532 745,529',
  '745,529 760,518 795,512 840,495 870,480 900,468 920,470 945,473 965,467 993,470 1000,485 1003,500 1014,512 1000,530 990,545 986,560 989,590 960,595 942,601 934,597 915,576 895,568 875,571 865,570 860,552 843,536 825,538 815,546 785,547 765,535 745,529',
  '849,541 845,560 841,574 846,600', '989,590 1003,598 1025,589 1042,592 1044,608',
  '1014,512 1030,513 1055,502 1070,496', '1108,470 1124,460',
  '700,559 715,570 727,582 740,590 750,598', '680,595 688,605 686,618'
].forEach(s => line(s, '#ff5500', 2));
g.fillStyle = '#ff5500';
[[662, 441, 8, 6], [676, 440, 7, 13], [658, 490, 9, 10], [683, 492, 5, 8], [584, 493, 5, 4], [768, 510, 6, 5], [462, 540, 6, 5], [720, 576, 9, 4], [433, 505, 5, 6], [725, 560, 4, 4], [986, 548, 6, 4], [955, 590, 5, 3]].forEach(r => g.fillRect(...r));
line('875,598 882,597 888,604 884,608 876,602', '#ff5500', 3);
line('1004,616 1016,617 1008,620', '#ff5500', 3);
line('1018,535 1024,532 1023,536 1018,536', '#ff5500', 1.500);
g.setLineDash([4, 1]);
line('1038,390 1020,388 1012,400 1008,410 1002,420 1000,428 1002,441', '#000', 1);
line('922,386 945,387 960,386 980,381 1040,382', '#000', 1);
line('894,447 948,447 956,443 1002,441 1044,432', '#000', 1);
g.setLineDash([]);

g.font = 'bold 16px "Liberation Sans", Arial, sans-serif';
g.fillStyle = '#111';
[['Hiệp Hòa', 436, 517, 71], ['Tân Yên', 531, 475, 60], ['Lạng Giang', 616, 471, 88], ['TP. Bắc Giang', 586, 551, 106], ['Việt Yên', 524, 553, 60], ['Yên Dũng', 637, 599, 69], ['Lục Nam', 746, 555, 68], ['Lục Ngạn', 867, 441, 72], ['Sơn Động', 1032, 529, 76]].forEach(t => {
  g.save(); g.translate(t[1], t[2]); g.scale(t[3] / g.measureText(t[0]).width, 1); g.fillText(t[0], 0, 0); g.restore();
});
```
